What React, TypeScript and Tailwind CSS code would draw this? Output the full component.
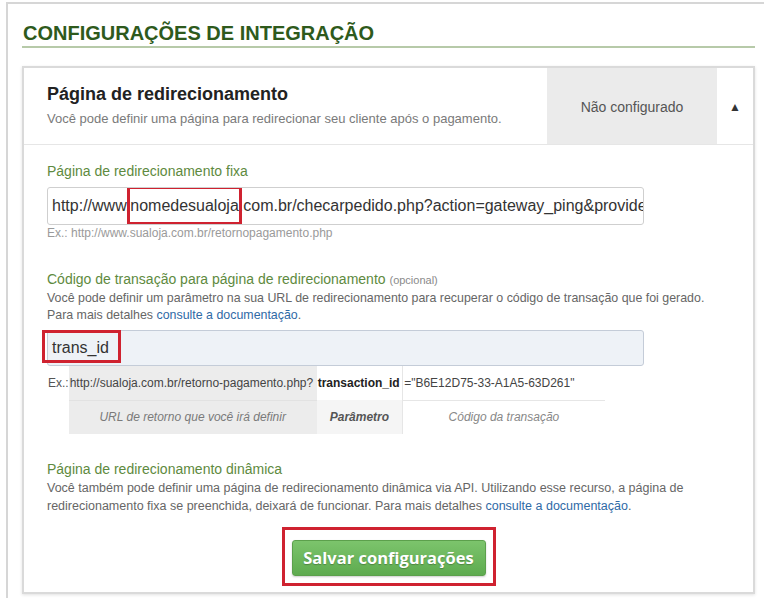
export default function App() {
  return (
    <div className="min-h-[600px] bg-white font-['Liberation_Sans',Arial,sans-serif]">
      <div className="mt-[2px] ml-[6px] border-t-2 border-l-2 border-[#d6d6d6] pl-[14px] pr-[9px] pb-[4px]">
        {/* page title */}
        <div className="pt-[17px] pb-[1px] border-b-2 border-[#b7caa9]">
          <h1 className="text-[20px] leading-[24px] font-bold text-[#2e5a1c] pl-[1px]">
            CONFIGURAÇÕES DE INTEGRAÇÃO
          </h1>
        </div>

        <div className="mt-[18px] border-2 border-[#dadada] shadow-[0_1px_3px_rgba(0,0,0,0.12)] bg-white">
          {/* card header */}
          <div className="flex h-[77px] border-b border-[#e6e6e6]">
            <div className="flex-1 pl-[23px] pt-[16px]">
              <div className="text-[18px] leading-[20px] font-bold text-[#222]">Página de redirecionamento</div>
              <div className="mt-[7px] text-[13px] leading-[16px] text-[#7a7a7a]">
                Você pode definir uma página para redirecionar seu cliente após o pagamento.
              </div>
            </div>
            <div className="w-[170px] bg-[#ebebeb] flex items-center justify-center pt-[3px] text-[14px] text-[#555]">
              Não configurado
            </div>
            <div className="w-[36px] flex items-center justify-center pt-[1px] text-[12px] text-[#333]">▲</div>
          </div>

          {/* card body */}
          <div className="px-[23px] pt-[16px] pb-[6px]">
            <div className="text-[14px] leading-[20px] text-[#5e8a40]">Página de redirecionamento fixa</div>
            <div className="mt-[6px] w-[597px] h-[38px] border border-[#cfcfcf] rounded-[3px] bg-white flex items-center pl-[4px] overflow-hidden whitespace-nowrap text-[16px] text-[#333]">
              <span>http://www.</span>
              <span className="relative">
                nomedesualoja
                <span className="absolute left-[-3px] right-[-3px] top-[-8px] bottom-[-7px] border-[3px] border-[#cf2230]" />
              </span>
              <span>.com.br/checarpedido.php?action=gateway_ping&amp;provide</span>
            </div>
            <div className="mt-[1px] text-[12px] leading-[14px] text-[#9a9a9a]">
              Ex.: http://www.sualoja.com.br/retornopagamento.php
            </div>

            <div className="mt-[29px] text-[14px] leading-[20px] text-[#5e8a40]">
              Código de transação para página de redirecionamento{" "}
              <span className="text-[11px] text-[#8a8a8a]">(opcional)</span>
            </div>
            <div className="text-[12.4px] leading-[17px] text-[#666]">
              Você pode definir um parâmetro na sua URL de redirecionamento para recuperar o código de transação que foi gerado.
              <br />
              Para mais detalhes <span className="text-[#2f6aa6]">consulte a documentação</span>.
            </div>
            <div className="relative mt-[6px] w-[597px] h-[36px] border border-[#c4ccd8] rounded-[3px] bg-[#eef2f7] flex items-center pl-[4px] text-[16px] text-[#333]">
              trans_id
              <span className="absolute left-[-6px] w-[79px] top-[-1px] bottom-[2px] border-[3px] border-[#cf2230]" />
            </div>

            {/* example table */}
            <table className="border-collapse text-[12px]">
              <tbody>
                <tr className="h-[34px]">
                  <td className="w-[21px] pl-[1px] text-[#555] align-middle">Ex.:</td>
                  <td className="w-[248px] bg-[#ececec] text-[#444] border-b border-[#e2e2e2] pl-[1px]">
                    http://sualoja.com.br/retorno-pagamento.php?
                  </td>
                  <td className="w-[86px] font-bold text-[#222] pl-[1px]">transaction_id</td>
                  <td className="w-[202px] text-[#444] border-l border-b border-[#e6e6e6] pl-[1px]">
                    ="B6E12D75-33-A1A5-63D261"
                  </td>
                </tr>
                <tr className="h-[34px]">
                  <td />
                  <td className="bg-[#ececec] text-center italic text-[#7a7a7a]">URL de retorno que você irá definir</td>
                  <td className="bg-[#f5f5f5] text-center italic font-bold text-[#555]">Parâmetro</td>
                  <td className="text-center italic text-[#888] border-l border-[#e6e6e6]">Código da transação</td>
                </tr>
              </tbody>
            </table>

            <div className="mt-[25px] text-[14px] leading-[20px] text-[#5e8a40]">Página de redirecionamento dinâmica</div>
            <div className="text-[12.5px] leading-[18px] text-[#666]">
              Você também pode definir uma página de redirecionamento dinâmica via API. Utilizando esse recurso, a página de
              <br />
              redirecionamento fixa se preenchida, deixará de funcionar. Para mais detalhes{" "}
              <span className="text-[#2f6aa6]">consulte a documentação</span>.
            </div>

            <div className="flex justify-center mt-[12px]">
              <div className="border-[3px] border-[#cf2230] px-[7px] pt-[10px] pb-[7px]">
                <button className="w-[194px] h-[36px] rounded-[3px] border border-[#5ca04c] bg-gradient-to-b from-[#7cc46c] to-[#5eab4f] text-white text-[16.5px] font-bold font-['Open_Sans',sans-serif] [text-shadow:0_1px_1px_rgba(0,0,0,0.25)] shadow-[0_1px_2px_rgba(0,0,0,0.2)]">
                  Salvar configurações
                </button>
              </div>
            </div>
          </div>
        </div>
      </div>
    </div>
  );
}
